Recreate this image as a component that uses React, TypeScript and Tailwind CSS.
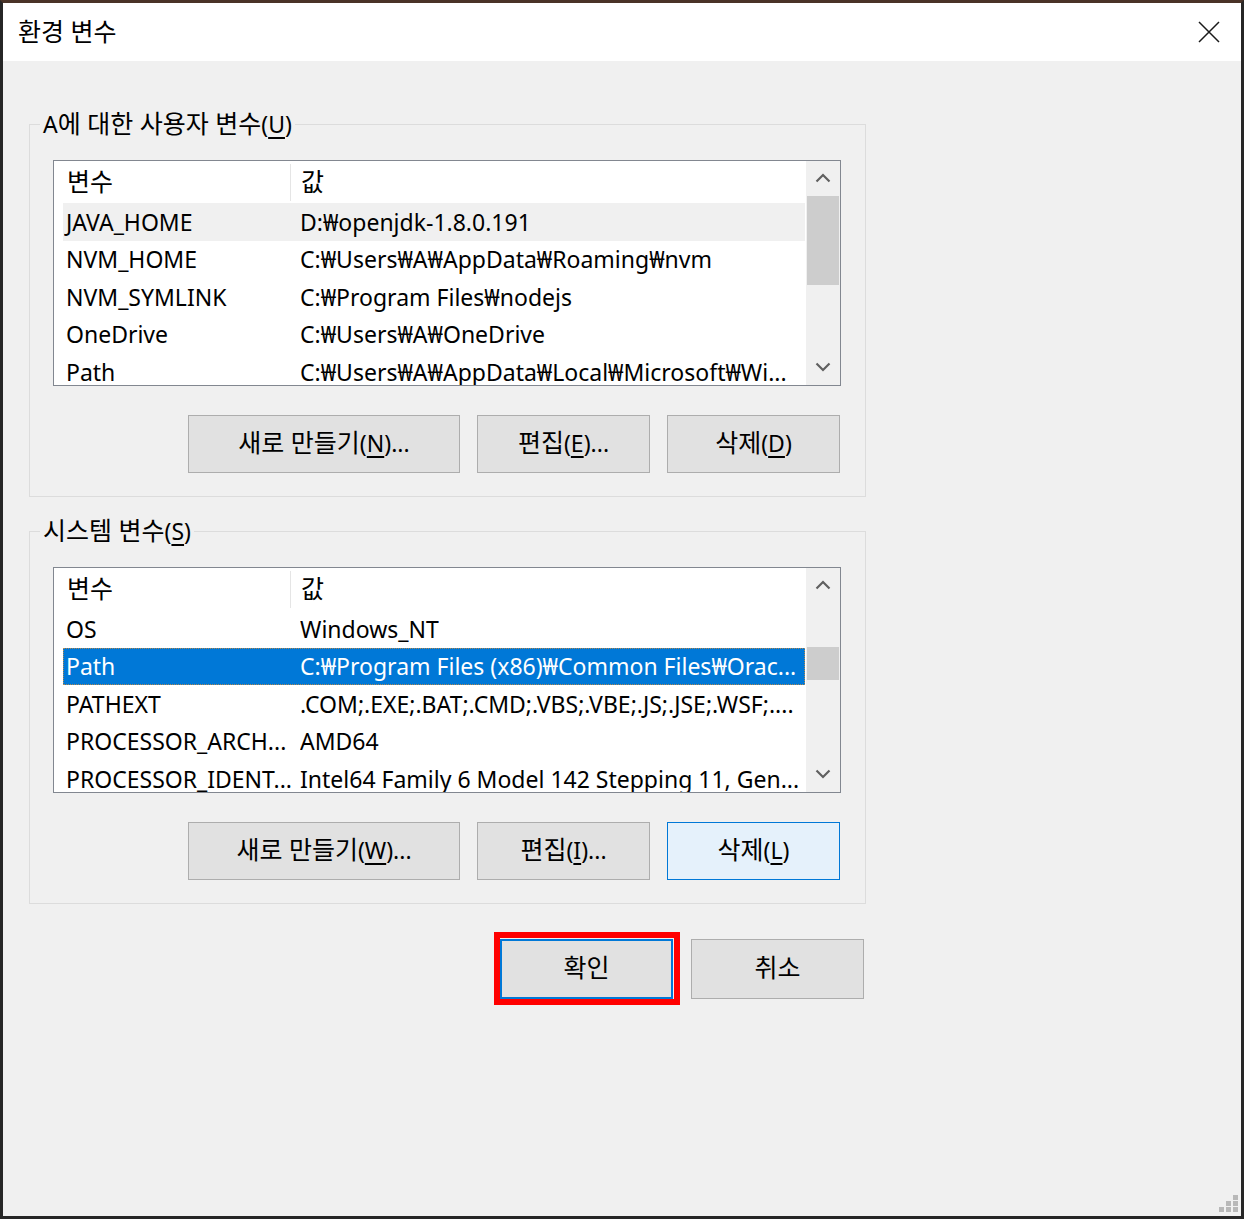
import type { ReactNode } from "react";

const FONT = "font-['Noto_Sans','Noto_Sans_CJK_KR',sans-serif]";

type Row = [string, string];

const userRows: Row[] = [
  ["JAVA_HOME", "D:₩openjdk-1.8.0.191"],
  ["NVM_HOME", "C:₩Users₩A₩AppData₩Roaming₩nvm"],
  ["NVM_SYMLINK", "C:₩Program Files₩nodejs"],
  ["OneDrive", "C:₩Users₩A₩OneDrive"],
  ["Path", "C:₩Users₩A₩AppData₩Local₩Microsoft₩Wi..."],
];

const systemRows: Row[] = [
  ["OS", "Windows_NT"],
  ["Path", "C:₩Program Files (x86)₩Common Files₩Orac..."],
  ["PATHEXT", ".COM;.EXE;.BAT;.CMD;.VBS;.VBE;.JS;.JSE;.WSF;...."],
  ["PROCESSOR_ARCH...", "AMD64"],
  ["PROCESSOR_IDENT...", "Intel64 Family 6 Model 142 Stepping 11, Gen..."],
];

export default function App() {
  return (
    <div
      className={`${FONT} w-[1244px] h-[1219px] flex flex-col border-[3px] border-[#262626] border-t-[#4a3328] text-black bg-white`}
    >
      {/* Title bar */}
      <div className="h-[58px] shrink-0 bg-white flex items-center justify-between pl-[15px] pr-[21px]">
        <span className="text-[23px] leading-none pb-[2px]">
          <K>환경 변수</K>
        </span>
        <CloseIcon />
      </div>

      {/* Body */}
      <div className="flex-1 bg-[#f0f0f0] flex flex-col pl-[26px]">
        <GroupBox
          className="mt-[48px]"
          title={
            <>
              A<K>에 대한 사용자 변수</K>(<Mn>U</Mn>)
            </>
          }
        >
          <ListView rows={userRows} hoverIndex={0} thumb="mt-[1px] h-[89px]" />
          <div className="flex justify-end gap-[17px] pr-[1px] mt-[29px]">
            <Btn w="w-[272px]">
              <K>새로 만들기</K>(<Mn>N</Mn>)...
            </Btn>
            <Btn w="w-[173px]">
              <K>편집</K>(<Mn>E</Mn>)...
            </Btn>
            <Btn w="w-[173px]">
              <K>삭제</K>(<Mn>D</Mn>)
            </Btn>
          </div>
        </GroupBox>

        <GroupBox
          className="mt-[19px]"
          title={
            <>
              <K>시스템 변수</K>(<Mn>S</Mn>)
            </>
          }
        >
          <ListView rows={systemRows} selectedIndex={1} thumb="mt-[45px] h-[33px]" />
          <div className="flex justify-end gap-[17px] pr-[1px] mt-[29px]">
            <Btn w="w-[272px]">
              <K>새로 만들기</K>(<Mn>W</Mn>)...
            </Btn>
            <Btn w="w-[173px]">
              <K>편집</K>(<Mn>I</Mn>)...
            </Btn>
            <Btn w="w-[173px]" variant="focus">
              <K>삭제</K>(<Mn>L</Mn>)
            </Btn>
          </div>
        </GroupBox>

        {/* Dialog buttons */}
        <div className="w-[837px] flex justify-end gap-[18px] pr-[2px] mt-[35px]">
          <div className="relative">
            <Btn w="w-[173px]" h="h-[60px]" variant="default">
              <K>확인</K>
            </Btn>
            <span className="absolute -top-[7px] -left-[6px] -right-[7px] -bottom-[6px] border-[6px] border-[#ff0000] pointer-events-none" />
          </div>
          <Btn w="w-[173px]" h="h-[60px]">
            <K>취소</K>
          </Btn>
        </div>

        {/* Resize grip */}
        <div className="mt-auto self-end mr-[3px] mb-[3px]">
          <GripIcon />
        </div>
      </div>
    </div>
  );
}

// Hangul in Malgun Gothic runs a bit larger than Noto CJK at the same size
function K({ children }: { children: ReactNode }) {
  return <span className="text-[25px] leading-none">{children}</span>;
}

function Mn({ children }: { children: ReactNode }) {
  return <span className="underline underline-offset-[4px] decoration-[1.5px]">{children}</span>;
}

function GroupBox({
  title,
  children,
  className = "",
}: {
  title: ReactNode;
  children: ReactNode;
  className?: string;
}) {
  return (
    <fieldset className={`w-[837px] border border-[#dcdcdc] ${className}`}>
      <legend className="ml-[10px] px-[3px] text-[23px] leading-[30px]">{title}</legend>
      <div className="pl-[23px] pr-[24px] pt-[21px] pb-[23px]">{children}</div>
    </fieldset>
  );
}

function ListView({
  rows,
  hoverIndex,
  selectedIndex,
  thumb,
}: {
  rows: Row[];
  hoverIndex?: number;
  selectedIndex?: number;
  thumb: string;
}) {
  return (
    <div className="w-[788px] h-[226px] border border-[#828790] bg-white flex overflow-hidden">
      <div className="flex-1 flex flex-col text-[23px] overflow-hidden">
        {/* Header */}
        <div className="h-[42px] shrink-0 flex items-center">
          <div className="w-[236px] pl-[13px]">
            <K>변수</K>
          </div>
          <div className="w-px h-[37px] bg-[#e5e5e5]" />
          <div className="pl-[10px]">
            <K>값</K>
          </div>
        </div>
        {rows.map(([name, value], i) => {
          const selected = i === selectedIndex;
          const hover = i === hoverIndex;
          return (
            <div
              key={name}
              className={`ml-[9px] mr-[1px] h-[37.5px] shrink-0 flex items-center whitespace-nowrap border ${
                selected
                  ? "bg-[#0078d7] text-white border-dotted border-[#b08850]"
                  : hover
                    ? "bg-[#f0f0f0] border-transparent"
                    : "border-transparent"
              }`}
            >
              <div className="w-[236px] pl-[2px] shrink-0 overflow-hidden">{name}</div>
              <div className="overflow-hidden">{value}</div>
            </div>
          );
        })}
      </div>

      {/* Scrollbar */}
      <div className="w-[34px] shrink-0 bg-[#f0f0f0] flex flex-col">
        <div className="h-[34px] shrink-0 flex items-center justify-center">
          <Chevron up />
        </div>
        <div className="flex-1 px-[1px]">
          <div className={`bg-[#cdcdcd] ${thumb}`} />
        </div>
        <div className="h-[36px] shrink-0 flex items-center justify-center">
          <Chevron />
        </div>
      </div>
    </div>
  );
}

function Btn({
  children,
  w,
  h = "h-[58px]",
  variant = "normal",
}: {
  children: ReactNode;
  w: string;
  h?: string;
  variant?: "normal" | "focus" | "default";
}) {
  const style =
    variant === "focus"
      ? "bg-[#e5f1fb] border border-[#0078d7]"
      : variant === "default"
        ? "bg-[#e1e1e1] border-2 border-[#0078d7]"
        : "bg-[#e1e1e1] border border-[#adadad]";
  return (
    <button className={`${w} ${h} ${style} text-[23px] flex items-center justify-center pb-[2px]`}>
      <span>{children}</span>
    </button>
  );
}

function Chevron({ up = false }: { up?: boolean }) {
  return (
    <svg width="16" height="10" viewBox="0 0 16 10" fill="none">
      <path
        d={up ? "M1.5 8.5 8 2l6.5 6.5" : "M1.5 1.5 8 8l6.5-6.5"}
        stroke="#606060"
        strokeWidth="2.2"
      />
    </svg>
  );
}

function CloseIcon() {
  return (
    <svg width="22" height="22" viewBox="0 0 22 22" fill="none">
      <path d="M1 1l20 20M21 1 1 21" stroke="#1a1a1a" strokeWidth="1.5" />
    </svg>
  );
}

function GripIcon() {
  return (
    <svg width="19" height="18" viewBox="0 0 19 18">
      <g fill="#b8b8b8">
        <rect x="14" y="0" width="5" height="5" />
        <rect x="7" y="6" width="5" height="5" />
        <rect x="14" y="6" width="5" height="5" />
        <rect x="0" y="12" width="5" height="5" />
        <rect x="7" y="12" width="5" height="5" />
        <rect x="14" y="12" width="5" height="5" />
      </g>
    </svg>
  );
}
